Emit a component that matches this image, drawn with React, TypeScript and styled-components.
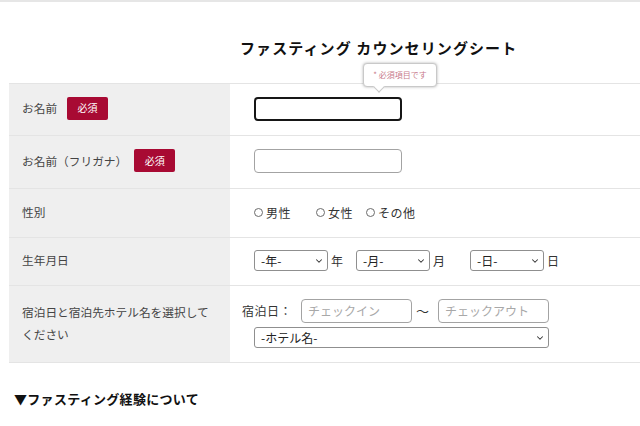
import React from "react";
import styled, { createGlobalStyle } from "styled-components";
import { ChevronDown } from "lucide-react";

const GlobalStyle = createGlobalStyle`
  html, body {
    margin: 0;
    padding: 0;
    background: #ffffff;
  }
  body {
    font-family: "Noto Sans CJK JP", "Noto Sans", sans-serif;
    color: #333333;
  }
  * {
    box-sizing: border-box;
  }
`;

const Page = styled.div`
  width: 640px;
  height: 426px;
  overflow: hidden;
  border-top: 2px solid #e6e6e6;
`;

const Title = styled.h1`
  margin: 0;
  padding: 35px 0 0 240px;
  height: 81px;
  font-size: 15px;
  font-weight: 700;
  letter-spacing: 1.1px;
  color: #111111;
  line-height: 22px;
`;

const Table = styled.div`
  margin-left: 9px;
  border-top: 1px solid #e4e4e4;
`;

const Row = styled.div<{ $h: number }>`
  display: grid;
  grid-template-columns: 221px 1fr;
  height: ${(p) => p.$h}px;
  border-bottom: 1px solid #e4e4e4;
`;

const Label = styled.div`
  background: #efefef;
  padding: 0 0 3px 13px;
  display: flex;
  align-items: center;
  gap: 10px;
  font-size: 11.7px;
  line-height: 22px;
  color: #444444;
`;

const Badge = styled.span<{ $gap?: number }>`
  display: inline-flex;
  align-items: center;
  justify-content: center;
  width: 41px;
  height: 23px;
  margin-left: ${(p) => p.$gap ?? 0}px;
  background: #a80a33;
  border-radius: 2px;
  color: #ffffff;
  font-size: 10px;
`;

const Value = styled.div<{ $pad?: number }>`
  display: flex;
  align-items: center;
  padding: 0 0 2px ${(p) => p.$pad ?? 24}px;
  font-size: 12px;
  color: #333333;
`;

const FieldWrap = styled.div`
  position: relative;
`;

const TextBox = styled.input<{ $focus?: boolean; $w?: number }>`
  display: block;
  width: ${(p) => p.$w ?? 148}px;
  height: 24px;
  border: ${(p) => (p.$focus ? "2px solid #161616" : "1px solid #a3a3a3")};
  border-radius: 4px;
  padding: 0 6px;
  font-family: inherit;
  font-size: 12px;
  outline: none;
  background: #ffffff;
  &::placeholder {
    color: #a8a8a8;
  }
`;

const Tooltip = styled.div`
  position: absolute;
  left: 109px;
  top: -34px;
  width: 74px;
  height: 24px;
  background: #ffffff;
  border: 1px solid #c9c9c9;
  border-radius: 4px;
  box-shadow: 0 0 3px rgba(0, 0, 0, 0.3);
  display: flex;
  align-items: center;
  justify-content: center;
  font-size: 8px;
  color: #c87a8b;
  white-space: nowrap;
  &::after {
    content: "";
    position: absolute;
    left: 11px;
    bottom: -5px;
    width: 7px;
    height: 7px;
    background: #ffffff;
    border-right: 1px solid #c9c9c9;
    border-bottom: 1px solid #c9c9c9;
    transform: rotate(45deg);
  }
`;

const RadioGroup = styled.div`
  display: flex;
  align-items: center;
`;

const RadioItem = styled.label<{ $w: number }>`
  display: inline-flex;
  align-items: center;
  gap: 3px;
  width: ${(p) => p.$w}px;
  font-size: 12px;
  letter-spacing: 0.5px;
  color: #333333;
`;

const Circle = styled.span`
  width: 9px;
  height: 9px;
  border: 1px solid #6b6b6b;
  border-radius: 50%;
  background: #ffffff;
`;

const DateLine = styled.div`
  display: flex;
  align-items: center;
`;

const SelectWrap = styled.div<{ $w: number }>`
  position: relative;
  width: ${(p) => p.$w}px;
  height: 21px;
`;

const Select = styled.select`
  appearance: none;
  width: 100%;
  height: 100%;
  border: 1px solid #8f8f8f;
  border-radius: 3px;
  background: #ffffff;
  padding: 0 6px;
  font-family: inherit;
  font-size: 12px;
  color: #222222;
  outline: none;
`;

const Chevron = styled(ChevronDown)`
  position: absolute;
  right: 4px;
  top: 6px;
  pointer-events: none;
  color: #333333;
`;

const Unit = styled.span<{ $w: number }>`
  display: inline-block;
  width: ${(p) => p.$w}px;
  padding-left: 3px;
  font-size: 12px;
  color: #333333;
`;

const StayCol = styled.div`
  display: flex;
  flex-direction: column;
  gap: 4px;
`;

const StayLine = styled.div`
  display: flex;
  align-items: center;
  font-size: 12px;
  letter-spacing: 0.5px;
`;

const StayLabel = styled.span`
  width: 59px;
`;

const Tilde = styled.span`
  width: 26px;
  padding-left: 4px;
  font-size: 13px;
`;

const HotelLine = styled.div`
  padding-left: 12px;
`;

const Section = styled.h2`
  margin: 0;
  padding: 26px 0 0 14px;
  font-size: 13px;
  font-weight: 700;
  color: #111111;
  letter-spacing: 0.3px;
`;

function DateSelect(props: { text: string; unit: string; unitW: number }) {
  return (
    <>
      <SelectWrap $w={74}>
        <Select defaultValue="">
          <option value="">{props.text}</option>
        </Select>
        <Chevron size={10} strokeWidth={2.5} />
      </SelectWrap>
      <Unit $w={props.unitW}>{props.unit}</Unit>
    </>
  );
}

export default function App() {
  return (
    <Page>
      <GlobalStyle />
      <Title>ファスティング カウンセリングシート</Title>
      <Table>
        <Row $h={52}>
          <Label>
            お名前<Badge>必須</Badge>
          </Label>
          <Value>
            <FieldWrap>
              <Tooltip>* 必須項目です</Tooltip>
              <TextBox $focus />
            </FieldWrap>
          </Value>
        </Row>
        <Row $h={53}>
          <Label>
            お名前（フリガナ）<Badge $gap={-3}>必須</Badge>
          </Label>
          <Value>
            <TextBox />
          </Value>
        </Row>
        <Row $h={49}>
          <Label>性別</Label>
          <Value>
            <RadioGroup>
              <RadioItem $w={62}>
                <Circle />男性
              </RadioItem>
              <RadioItem $w={50}>
                <Circle />女性
              </RadioItem>
              <RadioItem $w={60}>
                <Circle />その他
              </RadioItem>
            </RadioGroup>
          </Value>
        </Row>
        <Row $h={48}>
          <Label>生年月日</Label>
          <Value>
            <DateLine>
              <DateSelect text="-年-" unit="年" unitW={28} />
              <DateSelect text="-月-" unit="月" unitW={40} />
              <DateSelect text="-日-" unit="日" unitW={20} />
            </DateLine>
          </Value>
        </Row>
        <Row $h={77}>
          <Label>
            宿泊日と宿泊先ホテル名を選択して
            <br />
            ください
          </Label>
          <Value $pad={12}>
            <StayCol>
              <StayLine>
                <StayLabel>宿泊日：</StayLabel>
                <TextBox $w={111} placeholder="チェックイン" />
                <Tilde>～</Tilde>
                <TextBox $w={111} placeholder="チェックアウト" />
              </StayLine>
              <HotelLine>
                <SelectWrap $w={295}>
                  <Select defaultValue="">
                    <option value="">-ホテル名-</option>
                  </Select>
                  <Chevron size={10} strokeWidth={2.5} />
                </SelectWrap>
              </HotelLine>
            </StayCol>
          </Value>
        </Row>
      </Table>
      <Section>▼ファスティング経験について</Section>
    </Page>
  );
}
